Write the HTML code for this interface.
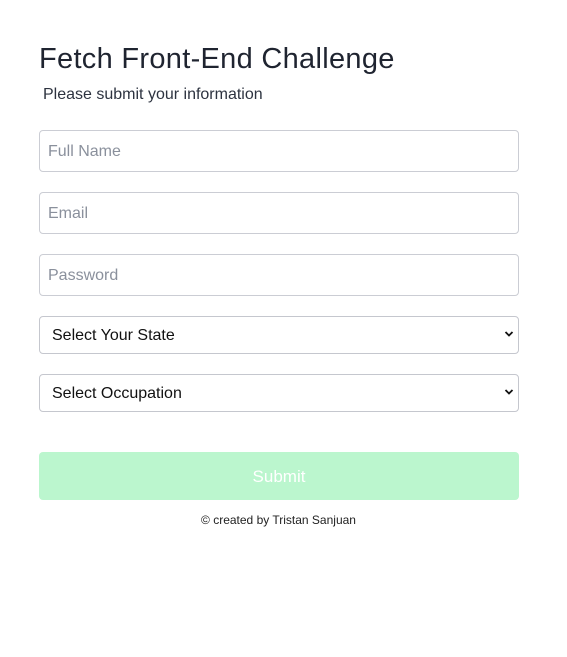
<!DOCTYPE html>
<html><head><style>
body{margin:0;background:#fff;font-family:"Liberation Sans",sans-serif;width:567px;height:657px;position:relative;}
.a{position:absolute;}
h1{position:absolute;left:39px;top:43px;margin:0;font-size:29px;font-weight:400;color:#1f2430;letter-spacing:0.3px;}
.sub{left:43px;top:86px;font-size:16px;color:#2d3340;}
.in{left:39px;width:478px;height:40px;border:1px solid #cbcdd4;border-radius:4px;font-size:16px;color:#8a909c;box-sizing:content-box;}
.in span{position:absolute;left:8px;top:12px;}
.sel{left:39px;width:478px;height:36px;border:1px solid #c5c7ce;border-radius:4px;font-size:16px;color:#111;}
.sel span{position:absolute;left:12px;top:10px;}
.sel svg{position:absolute;right:4px;top:13px;}
.btn{left:39px;top:452px;width:480px;height:48px;background:#bbf6ce;border-radius:4px;color:#fff;font-size:17px;text-align:center;line-height:49px;}
.ft{left:0;width:557px;top:513px;text-align:center;font-size:12px;color:#222;}
</style></head><body>
<h1>Fetch Front-End Challenge</h1>
<div class="a sub">Please submit your information</div>
<div class="a in" style="top:130px"><span>Full Name</span></div>
<div class="a in" style="top:192px"><span>Email</span></div>
<div class="a in" style="top:254px"><span>Password</span></div>
<div class="a sel" style="top:316px"><span>Select Your State</span><svg width="10" height="8" viewBox="0 0 10 8"><path d="M1.5 2l3.5 3.5L8.5 2" stroke="#111" stroke-width="1.8" fill="none"/></svg></div>
<div class="a sel" style="top:374px"><span>Select Occupation</span><svg width="10" height="8" viewBox="0 0 10 8"><path d="M1.5 2l3.5 3.5L8.5 2" stroke="#111" stroke-width="1.8" fill="none"/></svg></div>
<div class="a btn">Submit</div>
<div class="a ft">© created by Tristan Sanjuan</div>
</body></html>
